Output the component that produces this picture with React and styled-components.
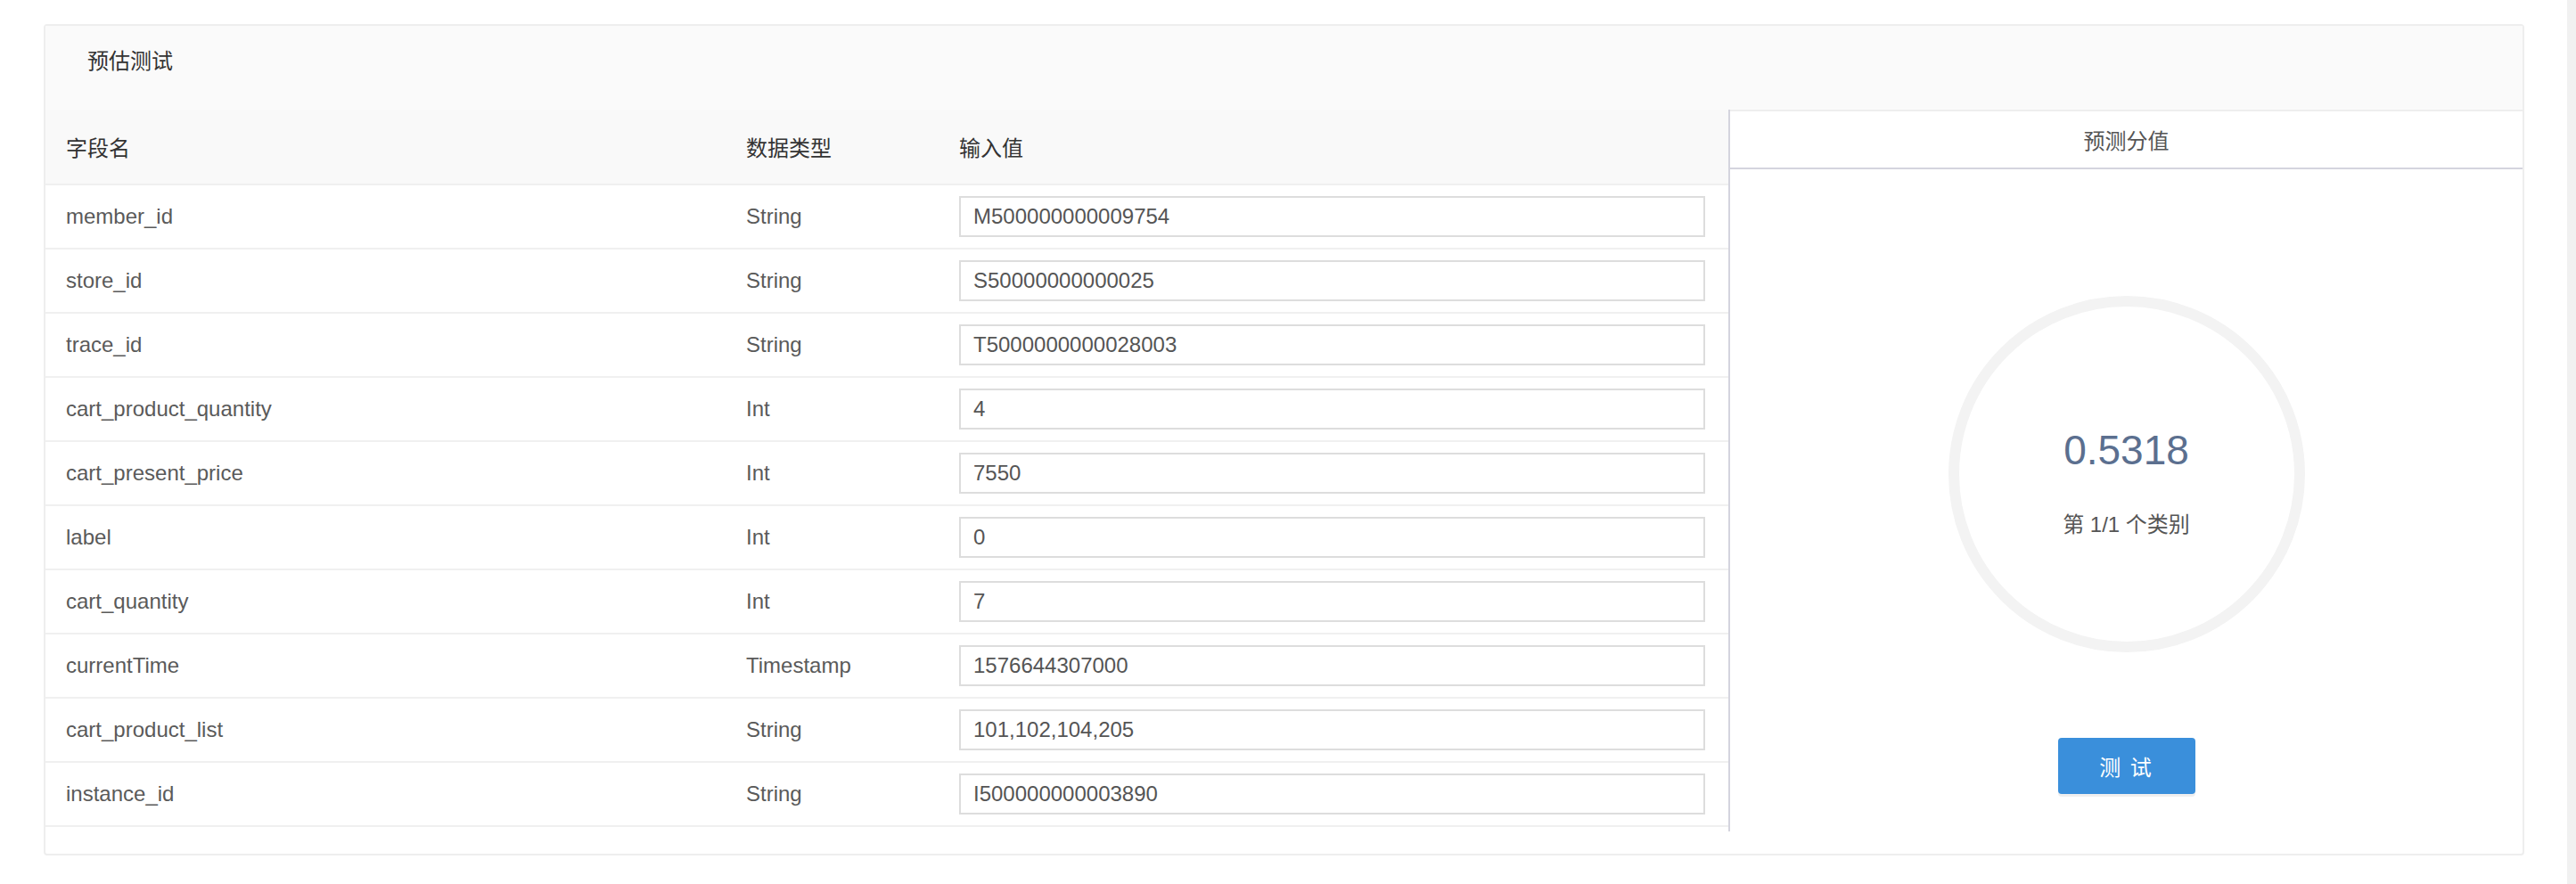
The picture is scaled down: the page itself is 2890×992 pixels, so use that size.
import React from 'react'
import styled, { createGlobalStyle } from 'styled-components'

const GlobalStyle = createGlobalStyle`
  html, body {
    margin: 0;
    padding: 0;
    background: #fff;
  }
  body {
    font-family: "Liberation Sans", "Noto Sans CJK SC", sans-serif;
    color: #555;
  }
  * {
    box-sizing: border-box;
  }
`

const fields = [
  { name: 'member_id', type: 'String', value: 'M500000000009754' },
  { name: 'store_id', type: 'String', value: 'S50000000000025' },
  { name: 'trace_id', type: 'String', value: 'T5000000000028003' },
  { name: 'cart_product_quantity', type: 'Int', value: '4' },
  { name: 'cart_present_price', type: 'Int', value: '7550' },
  { name: 'label', type: 'Int', value: '0' },
  { name: 'cart_quantity', type: 'Int', value: '7' },
  { name: 'currentTime', type: 'Timestamp', value: '1576644307000' },
  { name: 'cart_product_list', type: 'String', value: '101,102,104,205' },
  { name: 'instance_id', type: 'String', value: 'I500000000003890' },
]

const Shell = styled.div`
  display: flex;
  min-height: 992px;
`

const Page = styled.div`
  flex: 1;
  padding: 27px 48px 0 49px;
`

const ScrollTrack = styled.div`
  width: 10px;
  background: #f1f1f1;
`

const Card = styled.div`
  border: 2px solid #eeeeee;
  border-radius: 4px;
  background: #fff;
  padding-bottom: 25px;
`

const CardHeader = styled.div`
  height: 94px;
  padding: 20px 0 0 47px;
  background: #fafafa;
  font-size: 24px;
  line-height: 40px;
  color: #333;
`

const Body = styled.div`
  display: flex;
  align-items: stretch;
`

const Table = styled.div`
  width: 1888px;
  flex: none;
`

const Row = styled.div`
  display: grid;
  grid-template-columns: 763px 239px 1fr;
  align-items: center;
  padding: 0 26px 0 23px;
  height: ${(p) => (p.$head ? '85px' : '72px')};
  background: ${(p) => (p.$head ? '#f9f9f9' : '#fff')};
  border-bottom: 2px solid #f0f0f0;
  font-size: 24px;
  color: ${(p) => (p.$head ? '#333' : '#5a5a5a')};
`

const Cell = styled.div`
  white-space: nowrap;
`

const Input = styled.input`
  width: 100%;
  height: 46px;
  border: 2px solid #dddddd;
  border-radius: 0;
  padding: 0 14px;
  font-family: inherit;
  font-size: 24px;
  color: #555;
  outline: none;
  background: #fff;
`

const Result = styled.div`
  flex: 1;
  min-height: 810px;
  border-left: 2px solid #d4d4de;
  display: flex;
  flex-direction: column;
`

const ResultHeader = styled.div`
  height: 67px;
  border-top: 2px solid #eeeeee;
  border-bottom: 2px solid #d4d4de;
  display: flex;
  align-items: center;
  justify-content: center;
  font-size: 24px;
  color: #555;
`

const ResultBody = styled.div`
  flex: 1;
  display: flex;
  flex-direction: column;
  align-items: center;
  padding-top: 142px;
`

const Ring = styled.div`
  width: 400px;
  height: 400px;
  border: 12px solid #f3f3f3;
  border-radius: 50%;
  display: flex;
  flex-direction: column;
  align-items: center;
  padding-top: 133px;
`

const Score = styled.div`
  font-size: 46px;
  line-height: 56px;
  color: #5b6f8f;
`

const Category = styled.div`
  margin-top: 40px;
  font-size: 24px;
  line-height: 32px;
  color: #555;
`

const TestButton = styled.button`
  margin-top: 96px;
  width: 154px;
  height: 63px;
  border: none;
  border-radius: 4px;
  background: #3a8fdb;
  box-shadow: 0 3px 0 #efefef;
  color: #fff;
  font-family: inherit;
  font-size: 24px;
  letter-spacing: 2px;
  cursor: pointer;
`

export default function App() {
  return (
    <Shell>
      <GlobalStyle />
      <Page>
        <Card>
          <CardHeader>预估测试</CardHeader>
          <Body>
            <Table>
              <Row $head>
                <Cell>字段名</Cell>
                <Cell>数据类型</Cell>
                <Cell>输入值</Cell>
              </Row>
              {fields.map((f) => (
                <Row key={f.name}>
                  <Cell>{f.name}</Cell>
                  <Cell>{f.type}</Cell>
                  <Input defaultValue={f.value} />
                </Row>
              ))}
            </Table>
            <Result>
              <ResultHeader>预测分值</ResultHeader>
              <ResultBody>
                <Ring>
                  <Score>0.5318</Score>
                  <Category>第 1/1 个类别</Category>
                </Ring>
                <TestButton>测 试</TestButton>
              </ResultBody>
            </Result>
          </Body>
        </Card>
      </Page>
      <ScrollTrack />
    </Shell>
  )
}
